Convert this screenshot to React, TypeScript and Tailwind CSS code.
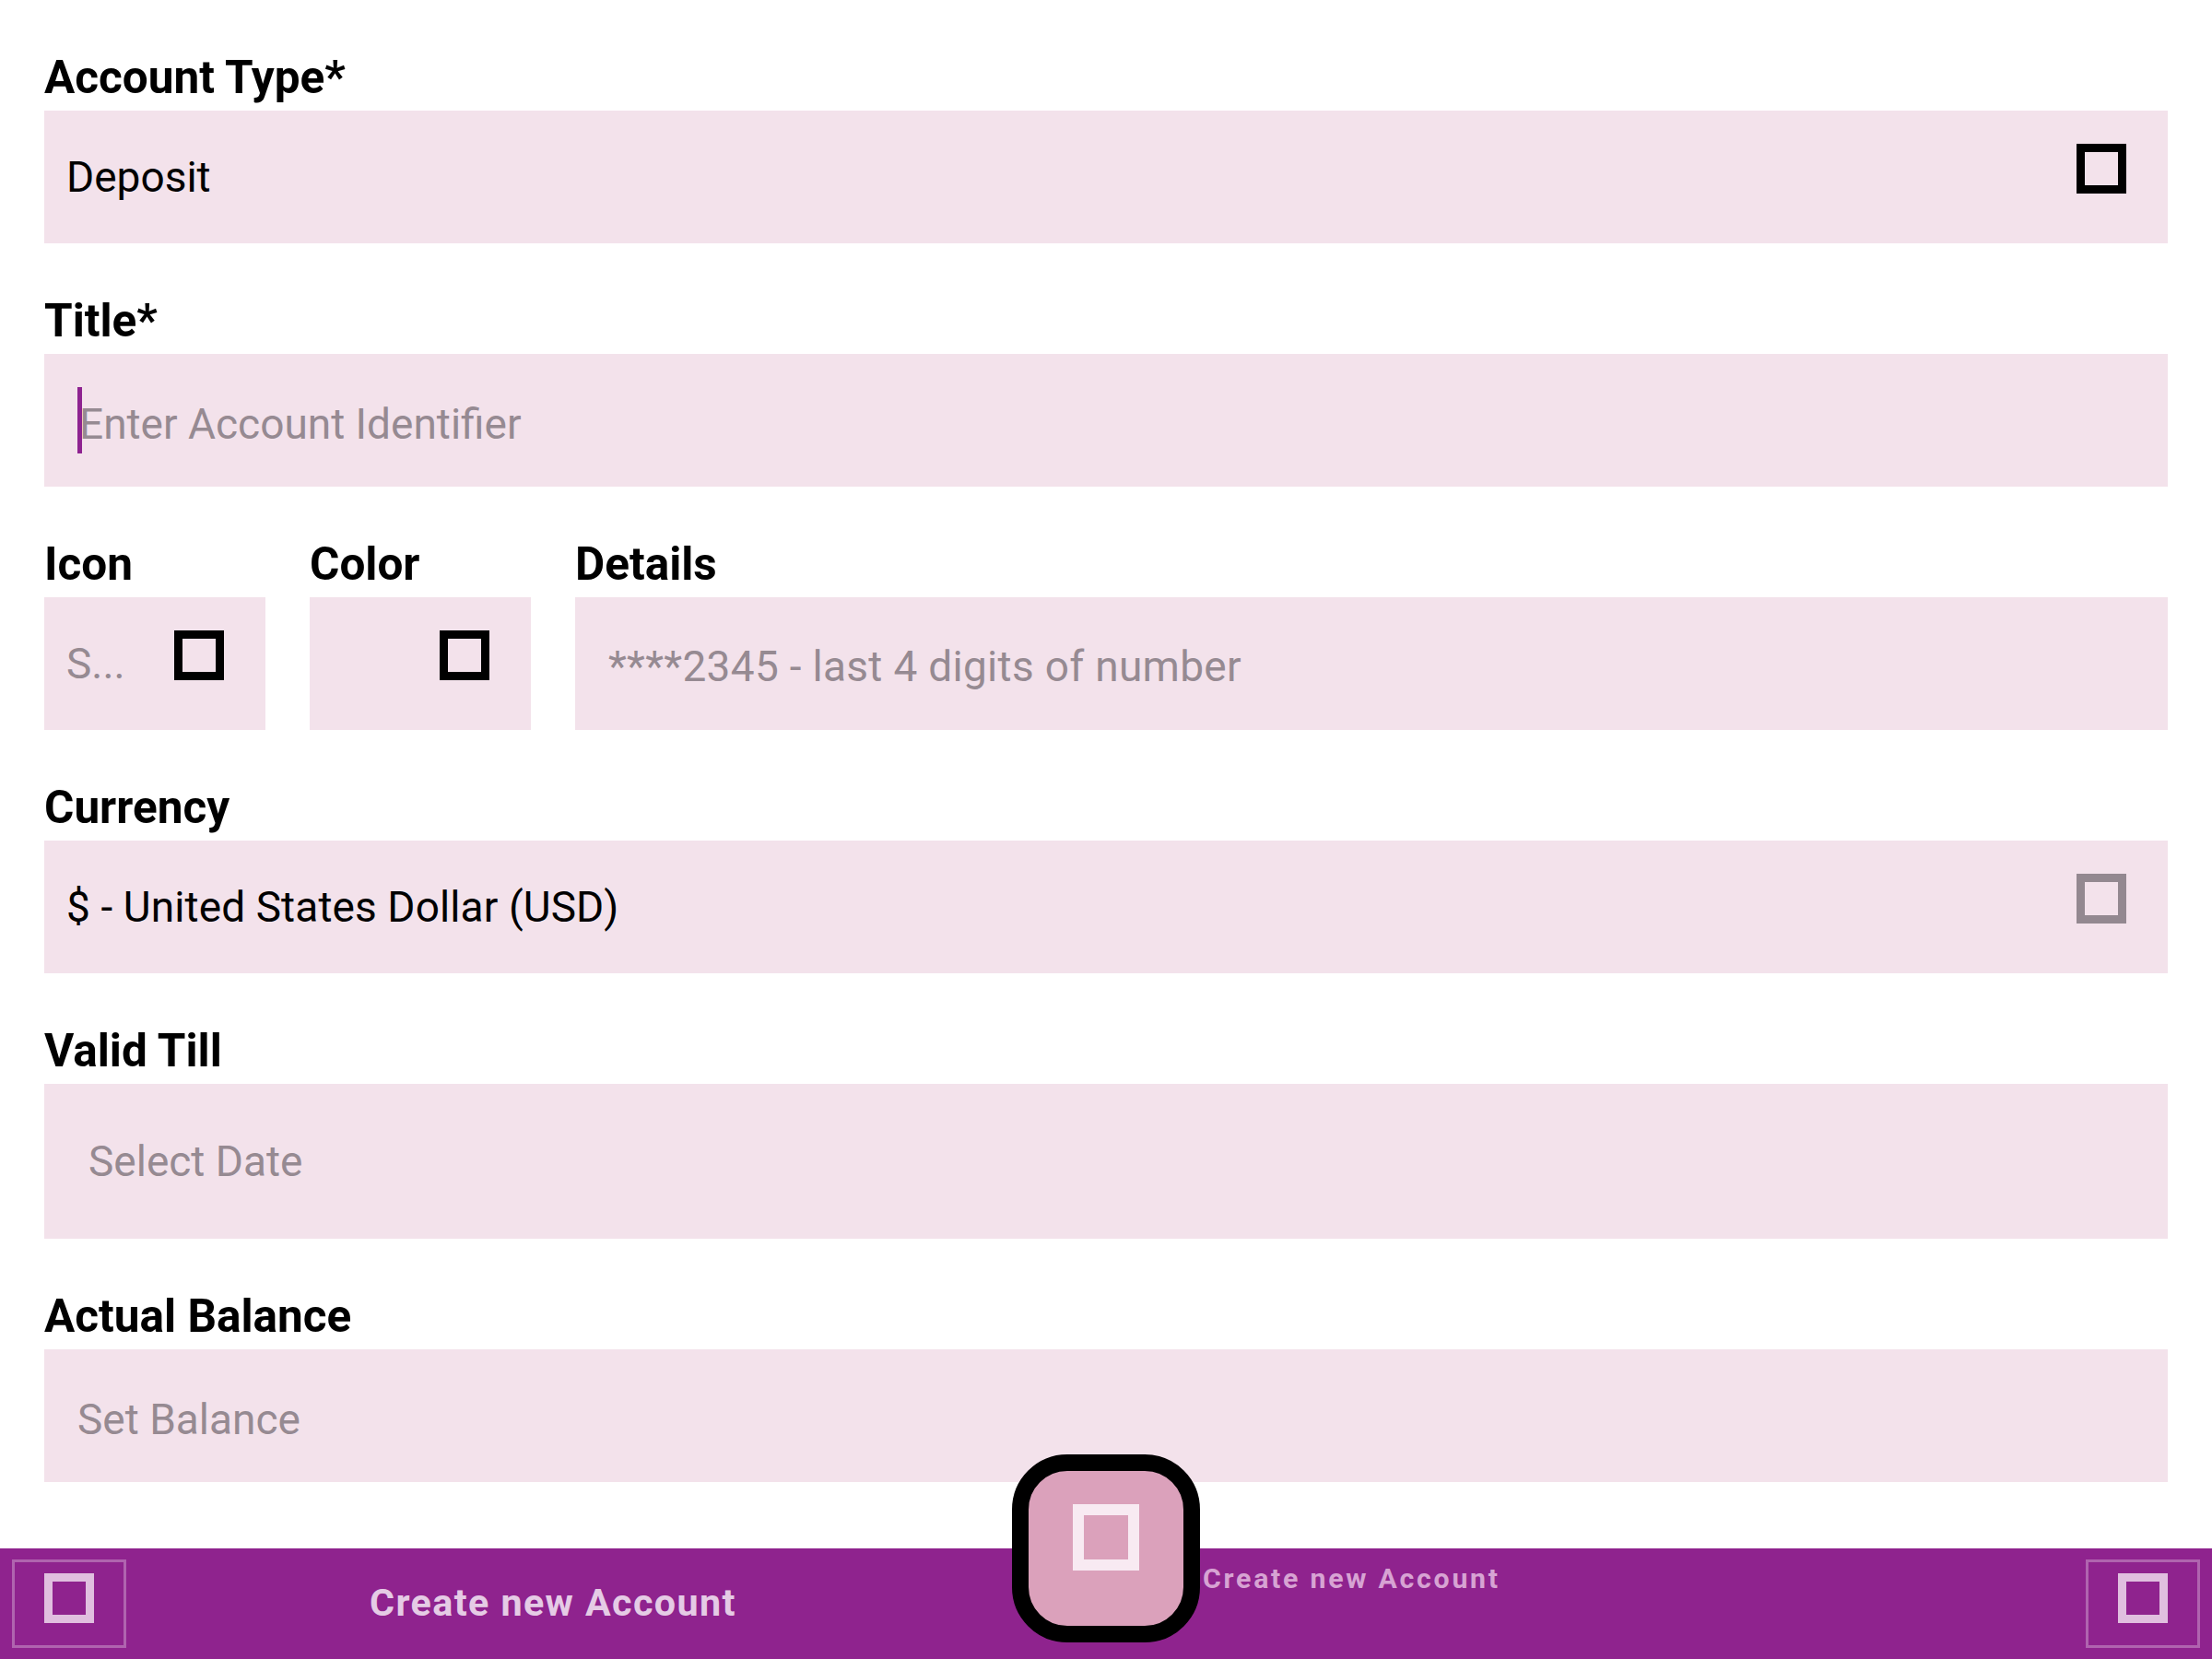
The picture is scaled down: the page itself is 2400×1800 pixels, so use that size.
import React from 'react'

const Tofu = ({ className = '' }: { className?: string }) => (
    <span className={`block shrink-0 w-[54px] h-[54px] border-[9px] ${className}`} />
)

const Label = ({ children }: { children: React.ReactNode }) => (
    <div className="text-[49.5px] leading-[56px] font-bold text-black mb-[8px] whitespace-nowrap">{children}</div>
)

const App = () => {
    return (
        <div className="w-[2400px] h-[1800px] flex flex-col bg-white font-[Roboto,sans-serif] overflow-hidden">
            <div className="flex-1 px-[48px] pt-[56px] flex flex-col gap-[56px]">
                <div>
                    <Label>Account Type*</Label>
                    <div className="h-[144px] bg-[#f3e2eb] flex items-center pl-[24px] pr-[45px] text-[46px] text-black">
                        <span className="flex-1">Deposit</span>
                        <Tofu className="border-black mb-[18px]" />
                    </div>
                </div>

                <div>
                    <Label>Title*</Label>
                    <div className="h-[144px] bg-[#f3e2eb] flex items-center pl-[36px] text-[46px] text-[#968a92]">
                        <span className="block w-[5px] h-[72px] bg-[#8e2290] shrink-0" />
                        <span className="-ml-[3px] mt-[8px]">Enter Account Identifier</span>
                    </div>
                </div>

                <div className="grid grid-cols-[240px_240px_1fr] gap-x-[48px]">
                    <div>
                        <Label>Icon</Label>
                        <div className="h-[144px] bg-[#f3e2eb] flex items-center pl-[24px] pr-[45px] text-[46px] text-[#968a92]">
                            <span className="flex-1">S...</span>
                            <Tofu className="border-black mb-[18px]" />
                        </div>
                    </div>
                    <div>
                        <Label>Color</Label>
                        <div className="h-[144px] bg-[#f3e2eb] flex items-center justify-end pr-[45px]">
                            <Tofu className="border-black mb-[18px]" />
                        </div>
                    </div>
                    <div>
                        <Label>Details</Label>
                        <div className="h-[144px] bg-[#f3e2eb] flex items-center pl-[36px] pt-[6px] text-[46px] tracking-[0.3px] text-[#968a92]">
                            ****2345 - last 4 digits of number
                        </div>
                    </div>
                </div>

                <div>
                    <Label>Currency</Label>
                    <div className="h-[144px] bg-[#f3e2eb] flex items-center pl-[24px] pr-[45px] text-[46px] tracking-[0.1px] text-black">
                        <span className="flex-1">$ - United States Dollar (USD)</span>
                        <Tofu className="border-[#938890] mb-[18px]" />
                    </div>
                </div>

                <div>
                    <Label>Valid Till</Label>
                    <div className="h-[168px] bg-[#f3e2eb] flex items-center pl-[48px] text-[46px] text-[#968a92]">
                        Select Date
                    </div>
                </div>

                <div>
                    <Label>Actual Balance</Label>
                    <div className="h-[144px] bg-[#f3e2eb] flex items-center pl-[36px] pt-[8px] text-[46px] text-[#968a92]">
                        Set Balance
                    </div>
                </div>
            </div>

            <div className="relative h-[120px] shrink-0 bg-[#8f238e] grid grid-cols-2">
                <div className="grid grid-cols-[137px_1fr_137px] items-center">
                    <div className="ml-[13px] w-[124px] h-[96px] border-[3px] border-[#b064af] flex items-center justify-center">
                        <Tofu className="border-[#e0bfdf] mb-[12px]" />
                    </div>
                    <div className="text-center text-[41.25px] font-bold tracking-[1.4px] text-[#e5cbe5] whitespace-nowrap">
                        Create new Account
                    </div>
                </div>
                <div className="flex items-start pl-[105px]">
                    <div className="mt-[15px] text-[30.25px] leading-[36px] font-bold tracking-[2.75px] text-[#d7a3d3] whitespace-nowrap">
                        Create new Account
                    </div>
                    <div className="ml-auto mr-[13px] self-center w-[124px] h-[96px] border-[3px] border-[#b064af] flex items-center justify-center">
                        <Tofu className="border-[#e0bfdf] mb-[12px]" />
                    </div>
                </div>

                <button className="absolute left-1/2 -translate-x-1/2 top-[-102px] w-[204px] h-[204px] border-[18px] border-black rounded-[60px] bg-[#dba1bb] flex items-center justify-center">
                    <span className="block w-[72px] h-[72px] border-[12px] border-[#f8eaf2] mb-[24px]" />
                </button>
            </div>
        </div>
    )
}

export default App
